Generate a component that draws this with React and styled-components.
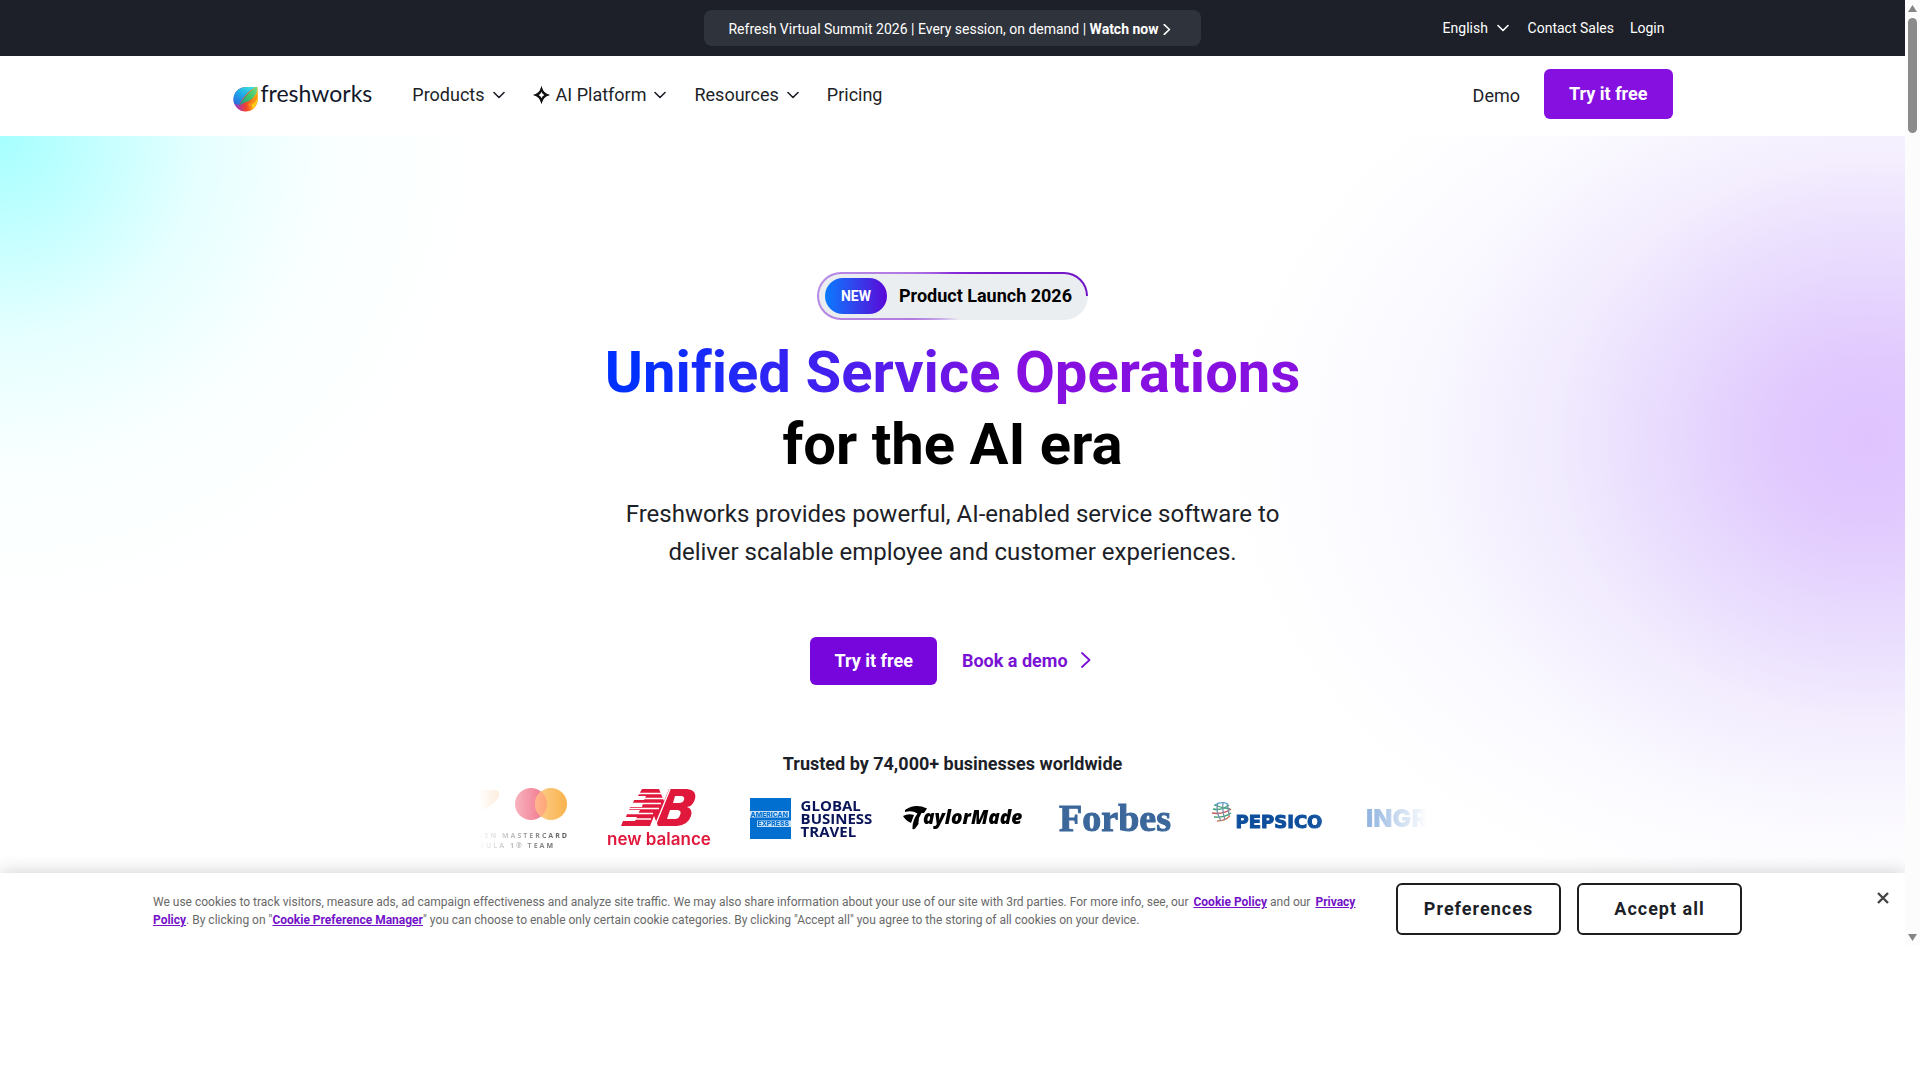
import React from "react";
import styled, { createGlobalStyle, css } from "styled-components";

const GlobalStyle = createGlobalStyle`
  *, *::before, *::after { box-sizing: border-box; }
  body {
    margin: 0;
    background: #fff;
    color: #1d1f28;
    font-family: Roboto, "Liberation Sans", sans-serif;
    font-size: 18px;
  }
  h1, p { margin: 0; }
  a { color: inherit; text-decoration: none; }
  button, select { font: inherit; color: inherit; border: 0; background: none; padding: 0; margin: 0; cursor: pointer; }
`;

const Shell = styled.div`
  display: grid;
  grid-template-columns: minmax(0, 1fr) 15px;
`;

const Page = styled.div`
  display: flex;
  flex-direction: column;
`;

const ScrollTrack = styled.div`
  display: flex;
  flex-direction: column;
  align-items: center;
  gap: 6px;
  padding: 5px 0 4px;
  background: #fcfcfc;
`;

const ScrollThumb = styled.div`
  width: 9px;
  height: 115px;
  border-radius: 5px;
  background: #8b8b8b;
`;

const ScrollSpacer = styled.div`
  flex: 1;
`;

const Container = styled.div`
  width: 100%;
  max-width: 1440px;
  margin: 0 auto;
`;

const TopBar = styled.header`
  background: #1d2028;
  color: #fff;
  font-size: 14px;
`;

const TopBarInner = styled(Container)`
  display: grid;
  grid-template-columns: 1fr auto 1fr;
  align-items: center;
  height: 56px;
`;

const Announcement = styled.a`
  grid-column: 2;
  display: flex;
  align-items: center;
  gap: 4px;
  height: 36px;
  padding: 2px 30px 0 24px;
  border-radius: 8px;
  background: #2f333b;
  white-space: pre;
`;

const TopLinks = styled.div`
  display: flex;
  justify-content: flex-end;
  align-items: center;
  gap: 16px;
  padding-right: 8px;
`;

const LanguageField = styled.label`
  display: flex;
  align-items: center;
  gap: 8px;
  padding-right: 3px;
`;

const LanguageSelect = styled.select`
  appearance: none;
  outline: none;
`;

const NavBar = styled(Container)`
  display: flex;
  align-items: center;
  height: 80px;
  padding-bottom: 2px;
`;

const Brand = styled.a`
  display: flex;
  align-items: flex-end;
  gap: 3px;
  margin-right: 40px;
`;

const Wordmark = styled.span`
  font-family: Lato, sans-serif;
  font-size: 23px;
  line-height: 28px;
  color: #12182a;
  padding-bottom: 5px;
`;

const NavMenu = styled.nav`
  display: flex;
  align-items: center;
  gap: 28px;
  flex: 1;
  padding-bottom: 1px;
`;

const NavButton = styled.button`
  display: flex;
  align-items: center;
  gap: 8px;
`;

const NavLabel = styled.span`
  display: flex;
  align-items: center;
  gap: 6px;
`;

const NavActions = styled.div`
  display: flex;
  align-items: center;
  gap: 24px;
`;

const PrimaryButton = styled.button`
  height: ${(p) => (p.$large ? "50px" : "48px")};
  padding: 0 ${(p) => (p.$large ? "25px" : "24px")} 2px;
  border-radius: 6px;
  background: ${(p) => (p.$large ? "#8610e0" : "#7606dc")};
  color: #fff;
  font-weight: 700;
`;

const NavCta = styled(PrimaryButton)`
  margin-bottom: 2px;
`;

const Hero = styled.main`
  display: flex;
  flex-direction: column;
  align-items: center;
  padding: 136px 0 13px;
  text-align: center;
  background:
    radial-gradient(ellipse 480px 480px at 0 0, #a6ffff 0%, rgba(178, 255, 255, 0.85) 16%, rgba(205, 255, 255, 0.5) 42%, rgba(235, 255, 255, 0.3) 68%, rgba(255, 255, 255, 0) 100%),
    radial-gradient(ellipse 440px 400px at 98% 41%, #dfc3fe 0%, rgba(224, 198, 254, 0.9) 20%, rgba(228, 208, 253, 0.62) 45%, rgba(238, 224, 252, 0.32) 70%, rgba(255, 255, 255, 0) 100%),
    radial-gradient(ellipse 640px 470px at 98% 43%, rgba(229, 222, 255, 0.9) 0%, rgba(236, 232, 255, 0.7) 45%, rgba(247, 245, 255, 0.6) 74%, rgba(255, 255, 255, 0) 100%),
    #fff;
`;

const LaunchBadge = styled.a`
  display: flex;
  align-items: center;
  gap: 12px;
  height: 48px;
  padding: 0 14px 0 6px;
  border: 2px solid transparent;
  border-radius: 24px;
  background:
    linear-gradient(#ebeef1, #ebeef1) padding-box,
    conic-gradient(from 90deg, #ebeef1 0%, #ebeef1 20%, #b07be0 42%, #b98be6 52%, #8a2bd8 75%, #6f14c4 100%) border-box;
  color: #000;
  font-weight: 700;
`;

const BadgeLabel = styled.span`
  padding-bottom: 2px;
`;

const NewTag = styled.span`
  display: grid;
  place-items: center;
  width: 62px;
  height: 36px;
  border-radius: 18px;
  background: linear-gradient(90deg, #0a7bff, #5b08d8);
  color: #fff;
  font-size: 14px;
`;

const Headline = styled.h1`
  margin-top: 16px;
  font-size: 58px;
  line-height: 72px;
  font-weight: 700;
  font-variant-ligatures: none;
  color: #000;
`;

const GradientLine = styled.span`
  display: block;
  background: linear-gradient(90deg, #0030ff 5%, #8610e0 60%);
  background-clip: text;
  -webkit-background-clip: text;
  color: transparent;
`;

const Lead = styled.p`
  max-width: 700px;
  margin-top: 15px;
  font-size: 24px;
  line-height: 38px;
`;

const HeroActions = styled.div`
  display: flex;
  align-items: center;
  gap: 24px;
  margin-top: 66px;
`;

const DemoLink = styled.a`
  display: flex;
  align-items: center;
  gap: 13px;
  padding: 0 4px 2px 1px;
  color: #7a12d4;
  font-weight: 700;
`;

const Trusted = styled.p`
  margin-top: 67px;
  line-height: 24px;
  font-weight: 700;
`;

const Marquee = styled.div`
  width: 100%;
  max-width: 949px;
  overflow: hidden;
  mask-image: linear-gradient(90deg, transparent, #000 12%, #000 88%, transparent);
`;

const MarqueeTrack = styled.div`
  display: flex;
  width: max-content;
  transform: translateX(-47px);
`;

const LogoSlot = styled.div`
  display: flex;
  flex-direction: ${(p) => (p.$stack ? "column" : "row")};
  align-items: center;
  justify-content: center;
  gap: ${(p) => p.$gap || "0"};
  width: 152px;
  height: 84px;
`;

const LogoText = styled.span`
  text-align: left;
  white-space: pre;
  ${(p) =>
    p.$brand === "balance" &&
    css`font: 600 17px/18px Inter, sans-serif; color: #e0183c;`}
  ${(p) =>
    p.$brand === "travel" &&
    css`font: 700 15px/13px "Open Sans", sans-serif; color: #0a1458;`}
  ${(p) =>
    p.$brand === "forbes" &&
    css`font: 700 38px/40px "Liberation Serif", serif; color: #3b679b; -webkit-text-stroke: 1px #3b679b;`}
  ${(p) =>
    p.$brand === "pepsico" &&
    css`font: 700 18px/18px "DejaVu Sans", sans-serif; color: #0d4f9c; padding-top: 8px; -webkit-text-stroke: 1px #0d4f9c;`}
  ${(p) =>
    p.$brand === "ingram" &&
    css`font: 900 25px/26px Inter, sans-serif; color: #2a6fc4;`}
`;

const CookieBar = styled.section`
  position: relative;
  display: flex;
  align-items: flex-start;
  padding: 10px 0 10px 153px;
  background: #fff;
  box-shadow: 0 0 18px rgba(0, 0, 0, 0.2);
  clip-path: inset(-20px 0 0 0);
`;

const CookieText = styled.p`
  flex: 1;
  margin-right: 36px;
  padding-top: 10px;
  color: #696969;
  font-size: 12px;
  line-height: 18px;
`;

const PolicyLink = styled.a`
  margin-left: ${(p) => (p.$spaced ? "2px" : "0")};
  color: #7312c8;
  font-weight: 700;
  text-decoration: underline;
`;

const CookieActions = styled.div`
  display: flex;
  gap: 16px;
`;

const OutlineButton = styled.button`
  width: 165px;
  height: 52px;
  padding-bottom: 2px;
  border: 2px solid #1d1d1f;
  border-radius: 6px;
  font-weight: 700;
  letter-spacing: 1px;
`;

const CloseButton = styled.button`
  display: flex;
  justify-content: flex-end;
  width: 163px;
  padding: 9px 16px 0 0;
`;

function Chevron() {
  return (
    <svg width="12" height="8" viewBox="0 0 12 8" fill="none" stroke="currentColor" strokeWidth="1.6" aria-hidden="true">
      <path d="M1 1.5l5 5 5-5" strokeLinecap="round" strokeLinejoin="round" />
    </svg>
  );
}

function ArrowRight({ width, height, stroke }) {
  return (
    <svg width={width} height={height} viewBox="0 0 10 16" fill="none" stroke="currentColor" strokeWidth={stroke} aria-hidden="true">
      <path d="M1 1l7.500 7L1 15" strokeLinecap="round" strokeLinejoin="round" />
    </svg>
  );
}

function Triangle({ down }) {
  return (
    <svg width="9" height="7" viewBox="0 0 9 7" aria-hidden="true">
      <path d={down ? "M0 0h9L4.500 7z" : "M0 7h9L4.500 0z"} fill="#858585" />
    </svg>
  );
}

function Leaf() {
  return (
    <svg width="25" height="26" viewBox="0 0 25 26" aria-hidden="true">
      <defs>
        <linearGradient id="leafTop" x1="0" y1="1" x2="0.800" y2="0">
          <stop offset="0" stopColor="#2a62d8" />
          <stop offset="0.500" stopColor="#1fa6ea" />
          <stop offset="1" stopColor="#3ee6e0" />
        </linearGradient>
        <linearGradient id="leafLow" x1="0" y1="0" x2="1" y2="0">
          <stop offset="0" stopColor="#7d49d6" />
          <stop offset="0.300" stopColor="#c23a8c" />
          <stop offset="0.500" stopColor="#f0402f" />
          <stop offset="0.750" stopColor="#fb7a1c" />
          <stop offset="1" stopColor="#ffc400" />
        </linearGradient>
        <linearGradient id="leafMid" x1="0" y1="1" x2="1" y2="0">
          <stop offset="0" stopColor="#1d8f86" />
          <stop offset="0.500" stopColor="#3fc46a" />
          <stop offset="1" stopColor="#7be08a" />
        </linearGradient>
        <clipPath id="leafShape">
          <path d="M13 1H24.500V13.500A12 12 0 0 1 12.500 25.500A12 12 0 0 1 0.500 13.500C0.500 6 6 1 13 1z" />
        </clipPath>
      </defs>
      <g clipPath="url(#leafShape)">
        <path d="M0 0h25v26H0z" fill="url(#leafLow)" />
        <path d="M25 0C25 11 21 16 15 18L18 26H25z" fill="#fb8a1a" />
        <path d="M25 0C26 12 23 17 18.500 18L20 26H25z" fill="#ffc914" />
        <path d="M0 0H25C18 3 10 10 6 19L-1 17z" fill="url(#leafTop)" />
        <path d="M25 0Q24 11 16 15Q10 17 6 19.500Q12 8 25 0z" fill="url(#leafMid)" />
      </g>
    </svg>
  );
}

function Spark() {
  return (
    <svg width="17" height="18" viewBox="0 0 17 18" aria-hidden="true">
      <path
        fillRule="evenodd"
        fill="#111"
        d="M8.500 0.500Q10.300 7.200 16.500 9Q10.300 10.800 8.500 17.500Q6.700 10.800 0.500 9Q6.700 7.200 8.500 0.500zM8.500 5.800Q7.700 8.200 5.300 9Q7.700 9.800 8.500 12.200Q9.300 9.800 11.700 9Q9.300 8.200 8.500 5.800z"
      />
      <path d="M8.500 3Q9.800 7.700 14 9Q9.800 10.300 8.500 15Q7.200 10.300 3 9Q7.200 7.700 8.500 3z" fill="none" stroke="#111" strokeWidth="1.800" />
    </svg>
  );
}

function MastercardTeam() {
  return (
    <svg width="152" height="84" viewBox="431 776 152 84" role="img" aria-label="McLaren Mastercard Formula 1 Team">
      <path d="M440 790H495C501 790 500 797 496 801Q490 807 481 811Q485 802 479 799Q465 793 440 790z" fill="#f9a24b" />
      <circle cx="531" cy="804" r="16" fill="#e8173c" />
      <circle cx="551" cy="804" r="16" fill="#f79e1b" />
      <path d="M541 791.500a16 16 0 0 1 0 25a16 16 0 0 1 0-25z" fill="#ff6a1f" />
      <g fill="#222" fontFamily="Open Sans, sans-serif" fontWeight="700" fontSize="7" letterSpacing="2">
        <text x="569" y="838" textAnchor="end">MCLAREN MASTERCARD</text>
        <text x="555" y="848" textAnchor="end">FORMULA 1® TEAM</text>
      </g>
    </svg>
  );
}

function NewBalanceMark() {
  return (
    <svg width="76" height="37" viewBox="0 0 76 37" aria-hidden="true">
      <path
        fill="#e0183c"
        d="M21 0h17l5 12L48 0h18q10 1 8 10-2 7-8 8 6 2 4 9-3 9-14 10H37L33 27l-4 10H0l2-5h12l2-4H5l1-3h11l2-4H8l1-3h12l1-4H12l1-3h10l2-4h-8z"
      />
      <g stroke="#fff" strokeWidth="1.600">
        <path d="M16 4.500h26M13 9.500h30M11 14.500h29M8 19.500h30M6 24.500h26M3 30h27" />
      </g>
      <path d="M54 7h7q3 1 2 4-1 3-5 3h-6zM49 21h8q4 1 2 5-1 4-5 4h-8z" fill="#fff" />
      <path d="M49 0L34 37" stroke="#fff" strokeWidth="1.400" />
    </svg>
  );
}

function AmexMark() {
  return (
    <svg width="41" height="41" viewBox="0 0 41 41" role="img" aria-label="American Express">
      <path d="M0 0h41v41H0z" fill="#016fd0" />
      <path d="M0 13h39v6.500H0zM7 22.500h34V29H7z" fill="#c5def5" />
      <g fill="#016fd0" fontFamily="Inter, sans-serif" fontWeight="800" fontSize="6.800">
        <text x="0.500" y="18.700">AMERICAN</text>
        <text x="7.500" y="28.200">EXPRESS</text>
      </g>
    </svg>
  );
}

function TaylorMadeMark() {
  return (
    <svg width="120" height="28" viewBox="0 0 120 28" role="img" aria-label="TaylorMade">
      <path d="M0 12q5-3 11-1L8 19Q3 17 0 12z" fill="#000" />
      <path d="M2 6Q12-1 24 4.500L21 9H18.500Q15 14 15.500 20L12.500 24Q12 25.500 9.500 25Q9 17 14.500 9.500Q9 6 2 8z" fill="#000" />
      <text x="20" y="20" fill="#000" fontFamily="Open Sans, sans-serif" fontStyle="italic" fontWeight="800" fontSize="19">aylorMade</text>
    </svg>
  );
}

function PepsiGlobe() {
  return (
    <svg width="20" height="34" viewBox="0 0 20 34" fill="none" strokeWidth="1.300" aria-hidden="true">
      <path d="M3 4Q9 0 16 3" stroke="#5aa7dc" />
      <path d="M1 8Q9 10 17 4M2 4Q10 7 18 8" stroke="#3aa477" />
      <path d="M0 12Q10 14 19 8" stroke="#c65a5a" />
      <path d="M2 16Q12 17 19 12" stroke="#3f9f6b" />
      <path d="M5 20Q13 20 18 15" stroke="#d77a58" />
      <path d="M6 2Q3 10 9 20M11 1Q10 10 13 19M15 3Q17 9 17 15" stroke="#7792a8" />
    </svg>
  );
}

const menus = ["Products", "AI Platform", "Resources"];

export default function App() {
  return (
    <>
      <GlobalStyle />
      <Shell>
        <Page>
          <TopBar>
            <TopBarInner>
              <Announcement href="#summit">
                <span>Refresh Virtual Summit 2026 | Every session, on demand | <b>Watch now</b></span>
                <ArrowRight width={8} height={11} stroke={2.4} />
              </Announcement>
              <TopLinks>
                <LanguageField>
                  <LanguageSelect aria-label="Language">
                    <option>English</option>
                  </LanguageSelect>
                  <Chevron />
                </LanguageField>
                <a href="#sales">Contact Sales</a>
                <a href="#login">Login</a>
              </TopLinks>
            </TopBarInner>
          </TopBar>

          <NavBar>
            <Brand href="#home">
              <Leaf />
              <Wordmark>freshworks</Wordmark>
            </Brand>
            <NavMenu>
              {menus.map((name) => (
                <NavButton key={name}>
                  <NavLabel>
                    {name === "AI Platform" && <Spark />}
                    {name}
                  </NavLabel>
                  <Chevron />
                </NavButton>
              ))}
              <a href="#pricing">Pricing</a>
            </NavMenu>
            <NavActions>
              <a href="#demo">Demo</a>
              <NavCta $large>Try it free</NavCta>
            </NavActions>
          </NavBar>

          <Hero>
            <LaunchBadge href="#launch">
              <NewTag>NEW</NewTag>
              <BadgeLabel>Product Launch 2026</BadgeLabel>
            </LaunchBadge>
            <Headline>
              <GradientLine>Unified Service Operations</GradientLine>
              for the AI era
            </Headline>
            <Lead>
              Freshworks provides powerful, AI-enabled service software to deliver scalable employee and customer experiences.
            </Lead>
            <HeroActions>
              <PrimaryButton>Try it free</PrimaryButton>
              <DemoLink href="#book">
                Book a demo
                <ArrowRight width={10} height={16} stroke={1.8} />
              </DemoLink>
            </HeroActions>
            <Trusted>Trusted by 74,000+ businesses worldwide</Trusted>
            <Marquee>
              <MarqueeTrack>
                <LogoSlot><MastercardTeam /></LogoSlot>
                <LogoSlot $stack $gap="4px">
                  <NewBalanceMark />
                  <LogoText $brand="balance">new balance</LogoText>
                </LogoSlot>
                <LogoSlot $gap="10px">
                  <AmexMark />
                  <LogoText $brand="travel">{"GLOBAL\nBUSINESS\nTRAVEL"}</LogoText>
                </LogoSlot>
                <LogoSlot><TaylorMadeMark /></LogoSlot>
                <LogoSlot><LogoText $brand="forbes">Forbes</LogoText></LogoSlot>
                <LogoSlot $gap="4px">
                  <PepsiGlobe />
                  <LogoText $brand="pepsico">PEPSICO</LogoText>
                </LogoSlot>
                <LogoSlot><LogoText $brand="ingram">INGRAM</LogoText></LogoSlot>
              </MarqueeTrack>
            </Marquee>
          </Hero>

          <CookieBar aria-label="Cookie consent">
            <CookieText>
              We use cookies to track visitors, measure ads, ad campaign effectiveness and analyze site traffic. We may also share information about your use of our site with 3rd parties. For more info, see, our{" "}
              <PolicyLink $spaced href="#cookies">Cookie Policy</PolicyLink> and our{" "}
              <PolicyLink $spaced href="#privacy">Privacy Policy</PolicyLink>. By clicking on "<PolicyLink href="#manager">Cookie Preference Manager</PolicyLink>" you can choose to enable only certain cookie categories. By clicking "Accept all" you agree to the storing of all cookies on your device.
            </CookieText>
            <CookieActions>
              <OutlineButton>Preferences</OutlineButton>
              <OutlineButton>Accept all</OutlineButton>
            </CookieActions>
            <CloseButton aria-label="Close">
              <svg width="12" height="12" viewBox="0 0 12 12" stroke="#444" strokeWidth="2.400" aria-hidden="true">
                <path d="M1 1l10 10M11 1L1 11" />
              </svg>
            </CloseButton>
          </CookieBar>
        </Page>
        <ScrollTrack aria-hidden="true">
          <Triangle />
          <ScrollThumb />
          <ScrollSpacer />
          <Triangle down />
        </ScrollTrack>
      </Shell>
    </>
  );
}
